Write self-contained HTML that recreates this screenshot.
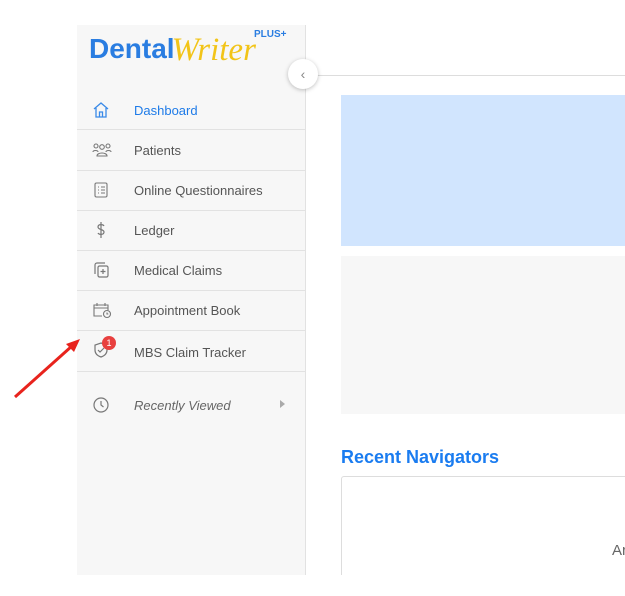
<!DOCTYPE html>
<html><head><style>
body{margin:0;width:625px;height:596px;background:#fff;font-family:"Liberation Sans",sans-serif;position:relative;overflow:hidden}
.sb{position:absolute;left:77px;top:25px;width:228px;height:550px;background:#f7f7f7;border-right:1px solid #e2e2e2}
.logo{position:absolute;left:12px;top:5px;font-size:28px;font-weight:bold;color:#2a7de1}
.logo i{font-family:"Liberation Serif",serif;font-weight:normal;color:#f2c418;font-size:33px;margin-left:-3px;position:relative;top:2px}
.plus{position:absolute;left:177px;top:4px;font-size:10px;font-weight:bold;color:#2a7de1}
.row{position:absolute;left:0;width:228px;height:40px;border-bottom:1px solid #e2e2e2;font-size:13px;color:#555}
.row span{position:absolute;left:57px;top:13px}
.row svg{position:absolute;left:15px;top:11px}
.tog{position:absolute;left:288px;top:59px;width:30px;height:30px;border-radius:50%;background:#fff;box-shadow:0 1px 4px rgba(0,0,0,.25);color:#888;font-size:14px;text-align:center;line-height:30px}
</style></head><body>
<div class="sb">
<div class="logo">Dental<i>Writer</i></div>
<div class="plus">PLUS+</div>
<div class="row" style="top:65px;height:39px;color:#1e7be8"><svg width="18" height="18" viewBox="0 0 18 18" fill="none" stroke="#3a8ae8" stroke-width="1.3"><path d="M2 8L9 2l7 6M4 7v9h10V7M7.5 16v-5h3v5"/></svg><span>Dashboard</span></div>
<div class="row" style="top:105px"><svg width="20" height="18" viewBox="0 0 20 18" fill="none" stroke="#777" stroke-width="1.1"><circle cx="4" cy="5" r="2"/><circle cx="10" cy="6" r="2.3"/><circle cx="16" cy="5" r="2"/><path d="M1 11c0-2 5-2 5 0M14 11c0-2 5-2 5 0M5 15c0-4 10-4 10 0z"/></svg><span>Patients</span></div>
<div class="row" style="top:145px"><svg width="18" height="18" viewBox="0 0 18 18" fill="none" stroke="#777" stroke-width="1.1"><rect x="3" y="2" width="12" height="14" rx="1.5"/><path d="M6 6h1M9 6h4M6 9h1M9 9h4M6 12h1M9 12h4"/></svg><span>Online Questionnaires</span></div>
<div class="row" style="top:185px"><svg width="18" height="18" viewBox="0 0 18 18" fill="none" stroke="#777" stroke-width="1.2"><path d="M12 5c-1-2-6-2-6 1s6 2 6 5-5 3-6 1M9 1v16"/></svg><span>Ledger</span></div>
<div class="row" style="top:225px"><svg width="18" height="18" viewBox="0 0 18 18" fill="none" stroke="#777" stroke-width="1.2"><path d="M3 13V4a2 2 0 012-2h8"/><rect x="6" y="5" width="10" height="11" rx="1.5"/><path d="M11 8v5M8.5 10.5h5"/></svg><span>Medical Claims</span></div>
<div class="row" style="top:265px"><svg width="20" height="18" viewBox="0 0 20 18" fill="none" stroke="#777" stroke-width="1.1"><path d="M10 15H2V4h14v5M2 7h14M5 2v3M13 2v3"/><circle cx="15" cy="13" r="3.5"/><path d="M15 11.5V13h1.3"/></svg><span>Appointment Book</span></div>
<div class="row" style="top:305px;height:41px"><svg width="18" height="18" viewBox="0 0 18 18" fill="none" stroke="#777" stroke-width="1.2"><path d="M9 2l6 2v5c0 4-3 6-6 7-3-1-6-3-6-7V4z"/><path d="M6 9l2 2 4-4"/></svg><div style="position:absolute;left:25px;top:6px;width:14px;height:14px;border-radius:50%;background:#e8403f;color:#fff;font-size:9px;text-align:center;line-height:14px">1</div><span style="top:15px">MBS Claim Tracker</span></div>
<div class="row" style="top:360px;border:none;color:#666"><svg width="18" height="18" viewBox="0 0 18 18" fill="none" stroke="#777" stroke-width="1.2"><circle cx="9" cy="9" r="7"/><path d="M9 5v4l2.5 2"/></svg><span style="font-style:italic">Recently Viewed</span><div style="position:absolute;left:203px;top:15px;border-left:5px solid #aaa;border-top:4px solid transparent;border-bottom:4px solid transparent"></div></div>
</div>
<div style="position:absolute;left:318px;top:75px;width:307px;height:1px;background:#ddd"></div>
<div class="tog">&#8249;</div>
<div style="position:absolute;left:341px;top:95px;width:284px;height:151px;background:#d1e5fe"></div>
<div style="position:absolute;left:341px;top:256px;width:284px;height:158px;background:#f7f7f7"></div>
<div style="position:absolute;left:341px;top:447px;font-size:18px;font-weight:bold;color:#1a7cf0">Recent Navigators</div>
<div style="position:absolute;left:341px;top:476px;width:290px;height:110px;border:1px solid #ddd;border-radius:3px;box-sizing:border-box"></div>
<div style="position:absolute;left:612px;top:542px;font-size:15px;color:#666">Ar</div>
<div style="position:absolute;left:0;top:575px;width:625px;height:21px;background:#fff"></div>
<svg style="position:absolute;left:0;top:0" width="625" height="596"><line x1="15" y1="397" x2="72" y2="346" stroke="#e8231d" stroke-width="3"/><path d="M80 339L66 344 74 352z" fill="#e8231d"/></svg>
</body></html>
